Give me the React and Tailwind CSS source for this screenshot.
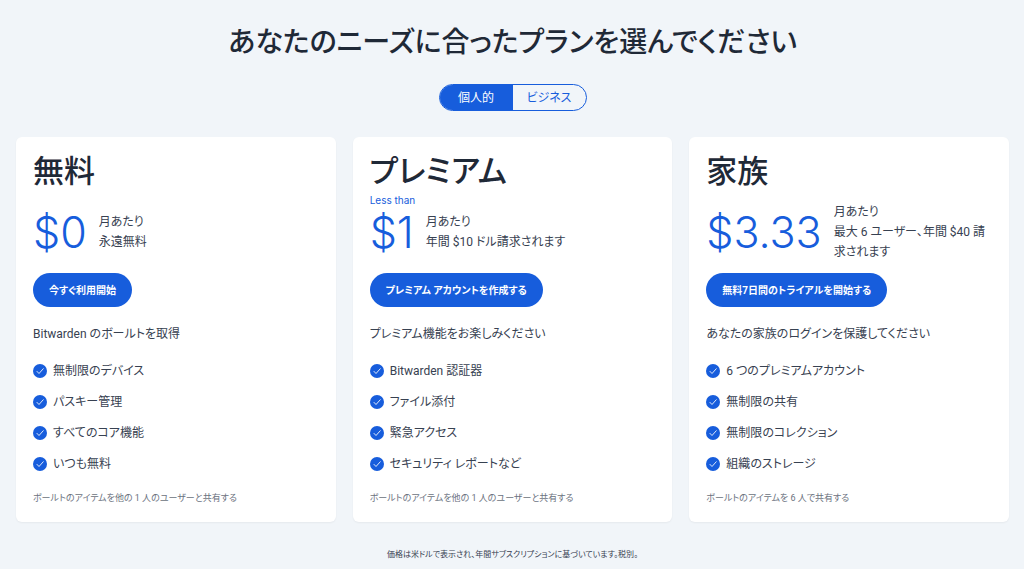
import { useState } from 'react'

const plans = [
  {
    name: '無料',
    price: '$0',
    billing: ['永遠無料'],
    cta: '今すぐ利用開始',
    intro: 'Bitwarden のボールトを取得',
    features: ['無制限のデバイス', 'パスキー管理', 'すべてのコア機能', 'いつも無料'],
    note: 'ボールトのアイテムを他の 1 人のユーザーと共有する',
  },
  {
    name: 'プレミアム',
    prefix: 'Less than',
    price: '$1',
    billing: ['年間 $10 ドル請求されます'],
    cta: 'プレミアム アカウントを作成する',
    intro: 'プレミアム機能をお楽しみください',
    features: ['Bitwarden 認証器', 'ファイル添付', '緊急アクセス', 'セキュリティ レポートなど'],
    note: 'ボールトのアイテムを他の 1 人のユーザーと共有する',
  },
  {
    name: '家族',
    price: '$3.33',
    billing: ['最大 6 ユーザー、年間 $40 請', '求されます'],
    cta: '無料7日間のトライアルを開始する',
    intro: 'あなたの家族のログインを保護してください',
    features: ['6 つのプレミアムアカウント', '無制限の共有', '無制限のコレクション', '組織のストレージ'],
    note: 'ボールトのアイテムを 6 人で共有する',
  },
]

const tabs = [
  { id: 'personal', label: '個人的' },
  { id: 'business', label: 'ビジネス' },
]

function CheckIcon() {
  return (
    <svg viewBox="0 0 28 28" className="size-3.5 shrink-0" aria-hidden="true">
      <circle cx="14" cy="14" r="14" fill="#175ddc" />
      <path d="M8 14.8l4 4.2L20.5 9.5" fill="none" stroke="#fff" strokeWidth="1.7" strokeLinecap="round" strokeLinejoin="round" />
    </svg>
  )
}

function PlanCard({ plan }) {
  return (
    <section className="rounded-md bg-white px-[17px] pt-[17px] pb-4 shadow-xs">
      <h2 className="text-[31px] leading-9 font-medium text-[#1f2937]">{plan.name}</h2>

      <div className="relative mt-[11px] flex h-[62px] items-center gap-3">
        {plan.prefix && (
          <span className="absolute -top-[9px] left-0 font-['Inter',sans-serif] text-[10px] leading-4 text-[#175ddc]">
            {plan.prefix}
          </span>
        )}
        <span className="font-['Inter',sans-serif] text-[43px] leading-none font-light text-[#175ddc]">{plan.price}</span>
        <div className="text-[12px] leading-5 whitespace-nowrap">
          <p>月あたり</p>
          {plan.billing.map(line => <p key={line}>{line}</p>)}
        </div>
      </div>

      <a href="#signup"
        className="mt-2.5 inline-flex h-[34px] items-center rounded-full bg-[#175ddc] px-4 text-[10px] font-bold text-white hover:bg-blue-800">
        {plan.cta}
      </a>

      <p className="mt-[17px] text-[12px] leading-5">{plan.intro}</p>

      <ul className="mt-[17px] space-y-[11px]">
        {plan.features.map(feature => (
          <li key={feature} className="flex items-center gap-1.5 text-[12px] leading-5">
            <CheckIcon />
            {feature}
          </li>
        ))}
      </ul>

      <p className="mt-4 text-[9px] leading-4 text-[#6b7280]">{plan.note}</p>
    </section>
  )
}

export default function App() {
  const [tab, setTab] = useState('personal')

  return (
    <main className="min-h-screen bg-[#f1f5f9] pt-[23px] pr-[15px] pl-4 font-['Roboto','Noto_Sans_CJK_JP',sans-serif] text-[#374151] [font-feature-settings:'palt']" lang="ja">
      <h1 className="text-center text-[28px] leading-10 font-medium text-[#1f2937]">
        あなたのニーズに合ったプランを選んでください
      </h1>

      <div className="mt-[21px] flex justify-center">
        <div className="flex h-[27px] overflow-hidden rounded-full border border-[#175ddc]">
          {tabs.map(t => (
            <button key={t.id} type="button" aria-pressed={tab === t.id} onClick={() => setTab(t.id)}
              className={tab === t.id
                ? 'w-[73px] bg-[#175ddc] text-[12px] text-white'
                : 'w-[73px] text-[12px] text-[#175ddc]'}>
              {t.label}
            </button>
          ))}
        </div>
      </div>

      <div className="mt-[26px] grid grid-cols-3 gap-[17px]">
        {plans.map(plan => <PlanCard key={plan.name} plan={plan} />)}
      </div>

      <p className="mt-[25px] text-center text-[8px] leading-4">
        価格は米ドルで表示され、年間サブスクリプションに基づいています。税別。
      </p>
    </main>
  )
}
